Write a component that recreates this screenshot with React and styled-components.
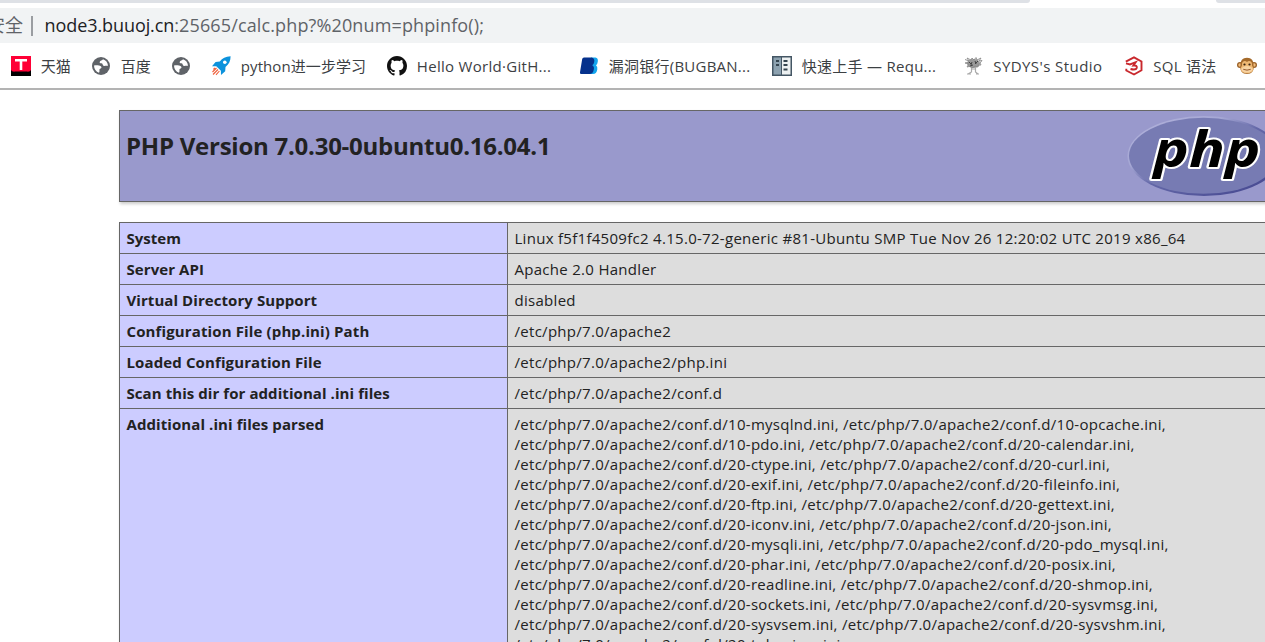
import React from "react";
import styled, { createGlobalStyle } from "styled-components";

const GlobalStyle = createGlobalStyle`
  * { box-sizing: border-box; }
  body {
    margin: 0;
    background: #fff;
    color: #222;
    font-family: "Open Sans", "Noto Sans CJK SC", sans-serif;
    overflow: hidden;
  }
`;

const Page = styled.div`
  width: 100vw;
  height: 100vh;
  overflow: hidden;
  display: flex;
  flex-direction: column;
`;

const TabStrip = styled.div`
  flex: none;
  display: flex;
  justify-content: space-between;
  height: 3px;
  margin-bottom: 5px;
`;

const InactiveTabs = styled.div`
  width: ${(p) => p.$width}px;
  background: #dee1e6;
  border-radius: ${(p) => (p.$side === "left" ? "0 0 4px 0" : "0 0 0 4px")};
`;

const AddressBar = styled.div`
  flex: none;
  display: flex;
  align-items: center;
  height: 35px;
  padding-bottom: 1px;
  background: #f1f3f4;
  font-size: 18px;
  line-height: 34px;
  white-space: nowrap;
  color: #5f6368;
`;

const Security = styled.span`
  margin-left: -13px;
`;

const Divider = styled.span`
  width: 2px;
  height: 20px;
  margin: 1px 11.5px 0 8px;
  background: #9a9da1;
`;

const Host = styled.span`
  color: #202124;
  letter-spacing: -0.08px;
`;

const UrlRest = styled.span`
  letter-spacing: 0.13px;
`;

const BookmarkBar = styled.nav`
  flex: none;
  display: flex;
  align-items: center;
  height: 47px;
  padding-left: 11px;
  border-bottom: 2px solid #b3b3b3;
`;

const Bookmark = styled.a`
  flex: none;
  display: flex;
  align-items: center;
  gap: 9.8px;
  width: ${(p) => p.$width}px;
  height: 20px;
  font-size: 15px;
  line-height: 20px;
  white-space: nowrap;
  color: #3c4043;
  letter-spacing: ${(p) => p.$tracking || 0}px;

  svg { flex: none; display: block; }
`;

const Content = styled.main`
  flex: none;
  width: 1168px;
  margin: 20px 0 0 119px;
`;

const Banner = styled.header`
  display: flex;
  justify-content: space-between;
  height: 92px;
  padding: 4px 5px 5px 6px;
  background: #9999cc;
  border: 1px solid #666;
  box-shadow: 1px 2px 3px #ccc;
`;

const Title = styled.h1`
  margin: 15px 0 0;
  font-size: 24px;
  font-weight: 700;
  line-height: 32px;
  letter-spacing: -0.25px;
`;

const InfoTable = styled.section`
  margin-top: 20px;
  border: 1px solid #666;
  border-bottom: 0;
  box-shadow: 1px 2px 3px #ccc;
  font-size: 15px;
  line-height: 20px;
`;

const Row = styled.div`
  display: grid;
  grid-template-columns: 388px 1fr;
  border-bottom: 1px solid #666;
`;

const Key = styled.div`
  padding: 5px 6.5px;
  background: #ccccff;
  border-right: 1px solid #666;
  font-weight: 700;
  letter-spacing: ${(p) => p.$tracking}px;
`;

const Value = styled.div`
  padding: 5px 6.5px;
  background: #ddd;
  letter-spacing: 0.29px;
`;

const Line = styled.div`
  white-space: nowrap;
`;

const TmallIcon = () => (
  <svg width="20" height="20" viewBox="0 0 20 20">
    <rect width="20" height="20" fill="#ff0036" />
    <path d="M0 14 Q1 16 4 15.600 H16 Q19 16 20 14 V20 H0Z" fill="#000" />
    <path d="M4 3 H16 V5.500 H11.300 V14 H8.700 V5.500 H4Z" fill="#fff" />
  </svg>
);

const GlobeIcon = () => (
  <svg width="20" height="20" viewBox="0 0 20 20">
    <circle cx="10" cy="10" r="9" fill="#5f6368" />
    <path d="M12 3.200 C11.500 4.800 9 4.300 8.700 6 C8.500 7 9 7.200 10.300 7.200 C12 7.300 11.300 9 12.500 9.700 C13.500 10.300 14.500 9.300 17 9.800 C16.800 6.500 14.800 4 12 3.200Z" fill="#fff" />
    <path d="M3 9.500 C5 9.300 8 9 9.800 10.300 C11.300 11.500 10 12.600 8.700 13 C8 13.400 9 15.500 8 16.700 C5 15.800 3 13 3 9.500Z" fill="#fff" />
  </svg>
);

const RocketIcon = () => (
  <svg width="20" height="20" viewBox="0 0 20 20">
    <path d="M19.600 .3 C14.500 .5 11.400 2.300 8.800 5.600 L4.600 6 L1 10.200 L5.300 10.300 L9.900 14.800 L10 19 L14.200 15.200 L14.500 11 C17.900 8.200 19.600 5.200 19.600 .3Z" fill="#0c92dc" />
    <circle cx="13.800" cy="6.200" r="1.800" fill="#fff" />
    <path d="M5.500 12 L1.500 16 M7 13.500 L2 18.500 M8.400 15 L5 18.800 M4 11.800 L2.300 13.400" stroke="#f0603c" strokeWidth="1.100" fill="none" />
  </svg>
);

const GithubIcon = () => (
  <svg width="20" height="20" viewBox="0 0 16 16">
    <path fill="#111" d="M8 0C3.580 0 0 3.580 0 8c0 3.540 2.290 6.530 5.470 7.590.4.070.55-.17.55-.38 0-.19-.01-.82-.01-1.490-2.010.37-2.530-.49-2.690-.94-.09-.23-.48-.94-.82-1.130-.28-.15-.68-.52-.01-.53.63-.01 1.080.58 1.230.82.72 1.210 1.870.87 2.330.66.07-.52.28-.87.51-1.070-1.780-.2-3.640-.89-3.640-3.950 0-.87.31-1.590.82-2.150-.08-.2-.36-1.020.08-2.120 0 0 .67-.21 2.200.82.64-.18 1.320-.27 2-.27s1.360.09 2 .27c1.530-1.040 2.200-.82 2.200-.82.44 1.100.16 1.920.08 2.120.51.56.82 1.270.82 2.150 0 3.070-1.870 3.750-3.650 3.950.29.25.54.73.54 1.480 0 1.070-.01 1.930-.01 2.200 0 .21.15.46.55.38A8.010 8.010 0 0 0 16 8c0-4.420-3.580-8-8-8z" />
  </svg>
);

const BugBankIcon = () => (
  <svg width="20" height="20" viewBox="0 0 20 20">
    <path d="M12 1.500 H16.500 Q19.300 2 18.800 5.500 Q18.600 8 17 9.300 Q18.800 10.500 18.300 13.500 Q17.500 18 14 18 H10Z" fill="#12a5ee" />
    <path d="M5 1.500 H12.500 Q16 2 15.200 6 Q14.900 8.300 13.200 9.300 Q15.500 10.500 14.800 13.500 Q14 18 10.500 18 H2 Q.6 18 1 16.200 L3.200 3 Q3.500 1.500 5 1.500Z" fill="#05318c" />
  </svg>
);

const ManualIcon = () => (
  <svg width="20" height="20" viewBox="0 0 20 20">
    <rect width="20" height="20" fill="#445664" />
    <path d="M1.500 1.500 H9 V18.500 H1.500Z" fill="#8da2b0" />
    <path d="M10 1.500 H18.500 V18.500 H10Z" fill="#ecf0f1" />
    <path d="M4 5 H7 M4 9 H7 M11.500 5 H15.500 M11.500 9 H15.500 M11.500 13.500 H15.500" stroke="#34444f" strokeWidth="2" />
  </svg>
);

const CreatureIcon = () => (
  <svg width="20" height="20" viewBox="0 0 20 20" fill="none">
    <ellipse cx="9.500" cy="7.500" rx="6.500" ry="4.500" fill="#999" />
    <path d="M1 3.500 L5 5 L3 2 L7 4 L8 2 L10 4 L12 1.500 L13 4 L17 2 L15 5 L18 4.500 L16 7 L17 9 L14 9 L14 11 L11 10 L8 12 L7 10 L3 11 L5 8 L1 7 L5 6" stroke="#8a8a8a" strokeWidth=".9" />
    <path d="M5 6 L7 8 M8 6 L7 9 M11 5 L12 8 M14 5 L11 8 M6 10 L9 9" stroke="#444" strokeWidth="1" />
    <path d="M7.500 12 V16 L4 18 M11.500 11 V16 L14 18 M8 13 H11 M3 18 H7 M12 18 H15" stroke="#aaa" strokeWidth="1.200" />
  </svg>
);

const HexThreeIcon = () => (
  <svg width="20" height="20" viewBox="0 0 20 20" fill="none" stroke="#c9282d">
    <path d="M1.800 5.600 L10 1.400 L17.500 5.500 V14.300 L10 18.500 L2.300 14.500 V12.800" strokeWidth="1.900" />
    <path d="M2 7.300 L6 8.500 L11.600 6.200 L9.300 9.600 Q13.300 9.200 12.800 11.700 Q12 14.500 6.500 13" strokeWidth="1.900" />
  </svg>
);

const MonkeyIcon = () => (
  <svg width="20" height="20" viewBox="0 0 20 20">
    <circle cx="3" cy="9" r="3" fill="#9a6128" />
    <circle cx="17" cy="9" r="3" fill="#9a6128" />
    <circle cx="3" cy="9" r="1.700" fill="#f2bd7d" />
    <circle cx="17" cy="9" r="1.700" fill="#f2bd7d" />
    <path d="M10 1.800 C14.500 1.800 16.800 5 16.500 9 C17.500 15 14.500 18 10 18 C5.500 18 2.500 15 3.500 9 C3.200 5 5.500 1.800 10 1.800Z" fill="#a56a2b" />
    <path d="M10 6 C12 4 15.500 5.500 15 9 C14.800 10 16.500 11 16.300 13 C16 16 13 17.300 10 17.300 C7 17.300 4 16 3.700 13 C3.500 11 5.200 10 5 9 C4.500 5.500 8 4 10 6Z" fill="#eeb873" />
    <ellipse cx="10" cy="13.300" rx="5.500" ry="3.300" fill="#f7d3a2" />
    <circle cx="7.500" cy="8.500" r="1.100" fill="#3b2412" />
    <circle cx="12.500" cy="8.500" r="1.100" fill="#3b2412" />
    <path d="M6.300 13.300 Q10 15 13.700 13.300" stroke="#8a4b20" strokeWidth=".9" fill="none" />
  </svg>
);

const PhpMark = styled.svg`
  flex: none;
  display: block;
  margin-top: -1px;

  text {
    font: italic 700 51px "Open Sans", sans-serif;
    fill: #000;
    stroke: #fff;
    stroke-width: 4px;
    stroke-linejoin: round;
    paint-order: stroke;
  }
`;

const PhpLogo = () => (
  <PhpMark width="154" height="84" viewBox="0 0 154 84">
    <defs>
      <linearGradient id="rim" x1="0" y1="0" x2="1" y2="1">
        <stop offset="0" stopColor="#b4b4dc" />
        <stop offset=".32" stopColor="#a5a7d4" />
        <stop offset=".5" stopColor="#6468a8" />
        <stop offset="1" stopColor="#40428c" />
      </linearGradient>
    </defs>
    <ellipse cx="77" cy="42" rx="76.500" ry="40" fill="url(#rim)" />
    <ellipse cx="76.500" cy="41.800" rx="74.500" ry="38" fill="#777bb3" />
    <text x="26.500" y="53" textLength="107" lengthAdjust="spacingAndGlyphs">php</text>
  </PhpMark>
);

const bookmarks = [
  { icon: TmallIcon, label: "天猫", width: 80 },
  { icon: GlobeIcon, label: "百度", width: 80 },
  { icon: GlobeIcon, label: "", width: 40 },
  { icon: RocketIcon, label: "python进一步学习", width: 176, tracking: 0.08 },
  { icon: GithubIcon, label: "Hello World·GitH...", width: 192, tracking: 0.3 },
  { icon: BugBankIcon, label: "漏洞银行(BUGBAN...", width: 193, tracking: 0.24 },
  { icon: ManualIcon, label: "快速上手 — Requ...", width: 191.5, tracking: 0.27 },
  { icon: CreatureIcon, label: "SYDYS's Studio", width: 160, tracking: 0.42 },
  { icon: HexThreeIcon, label: "SQL 语法", width: 113.5, tracking: 0.25 },
  { icon: MonkeyIcon, label: "", width: 20 },
];

const dir = "/etc/php/7.0/apache2";

const iniLines = [
  ["10-mysqlnd", "10-opcache"],
  ["10-pdo", "20-calendar"],
  ["20-ctype", "20-curl"],
  ["20-exif", "20-fileinfo"],
  ["20-ftp", "20-gettext"],
  ["20-iconv", "20-json"],
  ["20-mysqli", "20-pdo_mysql"],
  ["20-phar", "20-posix"],
  ["20-readline", "20-shmop"],
  ["20-sockets", "20-sysvmsg"],
  ["20-sysvsem", "20-sysvshm"],
  ["20-tokenizer"],
];

const rows = [
  { name: "System", value: "Linux f5f1f4509fc2 4.15.0-72-generic #81-Ubuntu SMP Tue Nov 26 12:20:02 UTC 2019 x86_64", tracking: 0.02 },
  { name: "Server API", value: "Apache 2.0 Handler", tracking: 0.08 },
  { name: "Virtual Directory Support", value: "disabled", tracking: 0.07 },
  { name: "Configuration File (php.ini) Path", value: dir, tracking: 0.13 },
  { name: "Loaded Configuration File", value: `${dir}/php.ini`, tracking: 0.12 },
  { name: "Scan this dir for additional .ini files", value: `${dir}/conf.d`, tracking: 0.07 },
];

export default function App() {
  return (
    <Page>
      <GlobalStyle />
      <TabStrip>
        <InactiveTabs $width={1030} $side="left" />
        <InactiveTabs $width={49} $side="right" />
      </TabStrip>
      <AddressBar>
        <Security>安全</Security>
        <Divider />
        <Host>node3.buuoj.cn</Host>
        <UrlRest>:25665/calc.php?%20num=phpinfo();</UrlRest>
      </AddressBar>
      <BookmarkBar>
        {bookmarks.map(({ icon: Icon, label, width, tracking }, i) => (
          <Bookmark key={i} $width={width} $tracking={tracking}>
            <Icon />
            {label}
          </Bookmark>
        ))}
      </BookmarkBar>
      <Content>
        <Banner>
          <Title>PHP Version 7.0.30-0ubuntu0.16.04.1</Title>
          <PhpLogo />
        </Banner>
        <InfoTable>
          {rows.map((row) => (
            <Row key={row.name}>
              <Key $tracking={row.tracking}>{row.name}</Key>
              <Value>{row.value}</Value>
            </Row>
          ))}
          <Row>
            <Key $tracking={0.08}>Additional .ini files parsed</Key>
            <Value>
              {iniLines.map((names) => (
                <Line key={names[0]}>
                  {names.map((n) => `${dir}/conf.d/${n}.ini`).join(", ")}
                  {names.length > 1 && ","}
                </Line>
              ))}
            </Value>
          </Row>
        </InfoTable>
      </Content>
    </Page>
  );
}
